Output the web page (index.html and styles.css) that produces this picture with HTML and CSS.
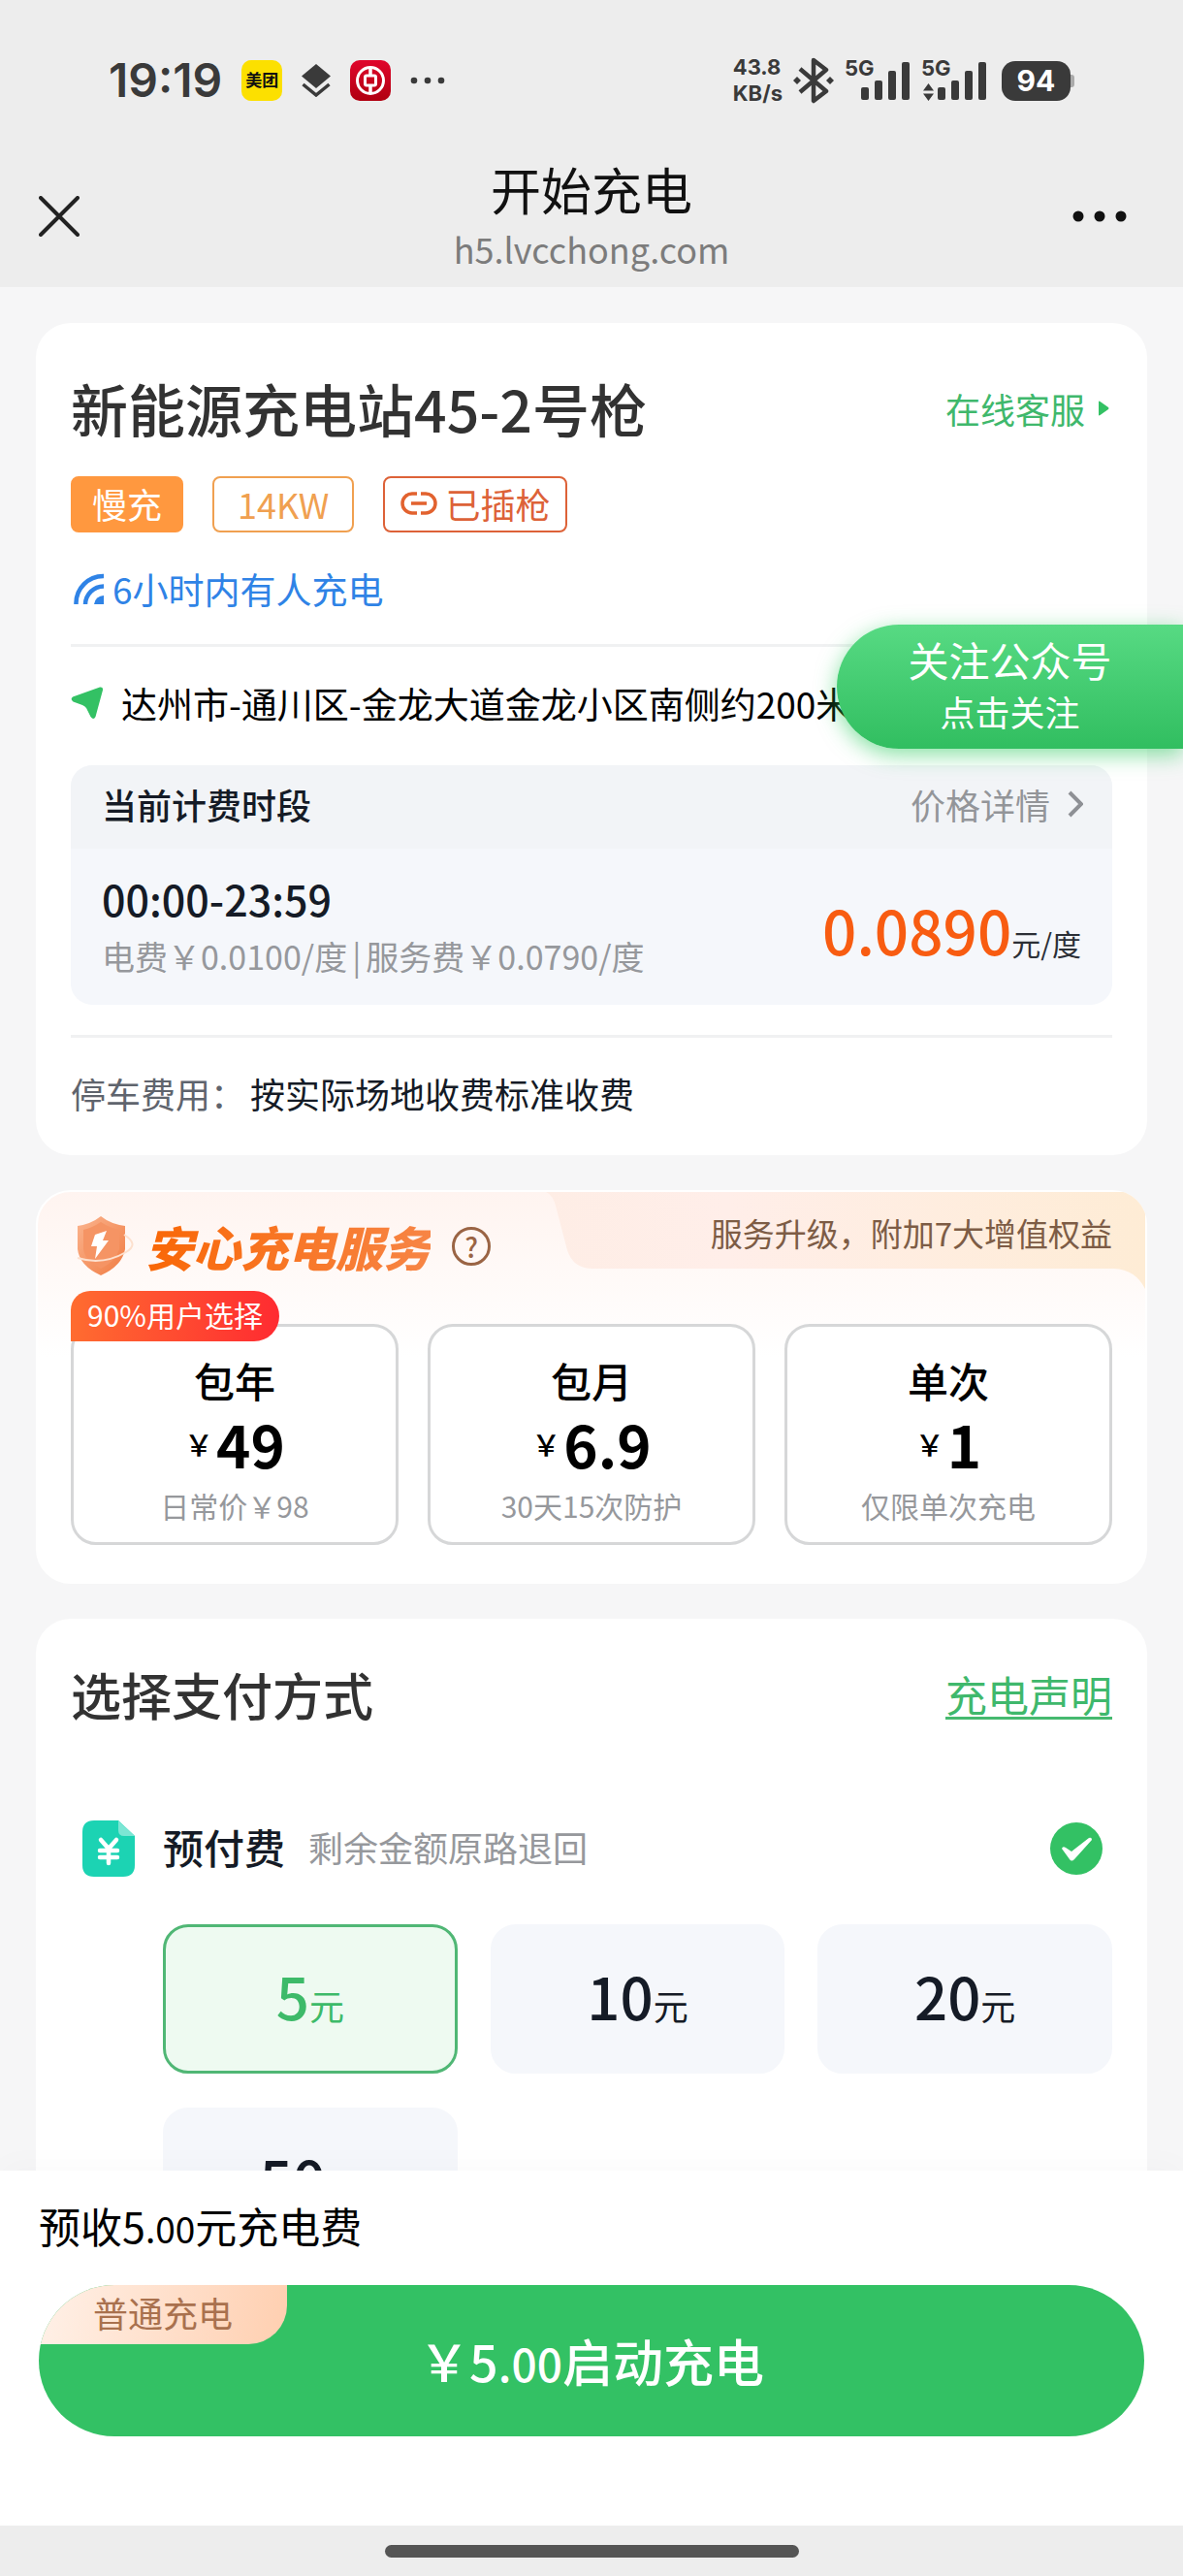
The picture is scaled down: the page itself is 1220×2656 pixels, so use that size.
FILE: index.html
```html
<!DOCTYPE html>
<html lang="zh-CN">
  <head>
    <meta charset="UTF-8">
    <meta name="viewport" content="width=device-width, initial-scale=1">
    <title>开始充电</title>
    <link rel="stylesheet" href="styles.css">
  </head>
  <body>
    <header class="top">
      <div class="status-bar">
        <div class="status-left">
          <span class="clock">19:19</span>
          <span class="app-icon">美团</span>
          <svg class="icon-layers" viewBox="0 0 30 34">
            <path d="M15 0L30 12.500L15 25L0 12.500Z" fill="#3a3a3a"/>
            <path d="M1.500 21L15 32L28.500 21" fill="none" stroke="#3a3a3a" stroke-width="3.500"/>
          </svg>
          <svg class="icon-bank" viewBox="0 0 42 42">
            <defs>
              <linearGradient id="bank" x1="0" y1="0" x2="0" y2="1">
                <stop offset="0" stop-color="#e0062c"/>
                <stop offset="1" stop-color="#b00010"/>
              </linearGradient>
            </defs>
            <rect width="42" height="42" rx="10" fill="url(#bank)"/>
            <circle cx="21" cy="21" r="13.500" fill="none" stroke="#fff" stroke-width="3"/>
            <rect x="15.500" y="16" width="11" height="10" rx="1.500" fill="none" stroke="#fff" stroke-width="3"/>
            <path d="M21 7v9M21 26v9" stroke="#fff" stroke-width="3.500"/>
          </svg>
          <svg class="icon-more" viewBox="0 0 36 8">
            <circle cx="4" cy="4" r="3.300"/><circle cx="18" cy="4" r="3.300"/><circle cx="32" cy="4" r="3.300"/>
          </svg>
        </div>
        <div class="status-right">
          <span class="net-speed">43.8<br>KB/s</span>
          <svg class="icon-bt" viewBox="0 0 42 48">
            <path d="M7 12L34 35L21 45V3L34 13L7 36" fill="none" stroke="#3a3a3a" stroke-width="4.500" stroke-linejoin="round"/>
            <path d="M4 20l4 4-4 4-4-4zM38 20l4 4-4 4-4-4z" fill="#3a3a3a"/>
          </svg>
          <svg class="icon-signal" viewBox="0 0 68 48">
            <text x="0" y="19">5G</text>
            <rect x="17" y="31" width="8" height="13" rx="2"/><rect x="31" y="24" width="8" height="20" rx="2"/>
            <rect x="45" y="14" width="8" height="30" rx="2"/><rect x="59" y="5" width="8" height="39" rx="2"/>
          </svg>
          <svg class="icon-signal" viewBox="0 0 68 48">
            <text x="0" y="19">5G</text>
            <path d="M7.500 27l5.500 7.500H2zM7.500 45L2 37.500h11z"/>
            <rect x="17" y="31" width="8" height="13" rx="2"/><rect x="31" y="24" width="8" height="20" rx="2"/>
            <rect x="45" y="14" width="8" height="30" rx="2"/><rect x="59" y="5" width="8" height="39" rx="2"/>
          </svg>
          <span class="battery">94</span>
        </div>
      </div>

      <nav class="nav-bar">
        <button class="nav-btn" type="button" aria-label="关闭">
          <svg width="42" height="42" viewBox="0 0 42 42">
            <path d="M2 2L40 40M40 2L2 40" fill="none" stroke="#222" stroke-width="4" stroke-linecap="round"/>
          </svg>
        </button>
        <div class="nav-title">
          <h1>开始充电</h1>
          <p>h5.lvcchong.com</p>
        </div>
        <button class="nav-btn nav-more" type="button" aria-label="更多">
          <svg width="56" height="12" viewBox="0 0 56 12">
            <circle cx="6" cy="6" r="5.500"/><circle cx="28" cy="6" r="5.500"/><circle cx="50" cy="6" r="5.500"/>
          </svg>
        </button>
      </nav>
    </header>

    <main class="content">
      <!-- station info -->
      <section class="card station">
        <div class="row">
          <h2 class="station-name">新能源充电站45-2号枪</h2>
          <a class="service-link" href="#">在线客服
            <svg width="12" height="16" viewBox="0 0 12 16"><path d="M1 1.500Q1 0 2.500 1L11 7Q12 8 11 9L2.500 15Q1 16 1 14.500Z" fill="#33c164"/></svg>
          </a>
        </div>
        <div class="tags">
          <span class="tag tag-fill">慢充</span>
          <span class="tag tag-line">14KW</span>
          <span class="tag tag-plug">
            <svg width="38" height="24" viewBox="0 0 38 24" fill="none" stroke="#e2622f" stroke-width="3.500">
              <path d="M17 2H12A10 10 0 0 0 12 22H17M21 2H26A10 10 0 0 1 26 22H21M11 12H27"/>
            </svg>已插枪
          </span>
        </div>
        <p class="recent">
          <svg width="32" height="32" viewBox="0 0 32 32" fill="none" stroke="#2f83e6" stroke-width="4.500">
            <path d="M2.500 32A28 28 0 0 1 31 3M12 32A19 19 0 0 1 31 13.500"/>
            <path d="M21 32A10 10 0 0 1 31 23V32Z" fill="#2f83e6" stroke="none"/>
          </svg>6小时内有人充电
        </p>
        <hr class="line">
        <p class="address">
          <svg width="34" height="34" viewBox="0 0 34 34">
            <path d="M2 10.500L30 .5Q33.500 0 33 3.500L25.500 31Q23.500 35 20.500 31L16 22Q14.500 20 12 19L2.500 15.500Q-1 13 2 10.500Z" fill="#33c164"/>
          </svg>
          <span>达州市-通川区-金龙大道金龙小区南侧约200米</span>
        </p>
        <div class="fee">
          <div class="fee-head">
            <strong>当前计费时段</strong>
            <a href="#">价格详情
              <svg width="16" height="28" viewBox="0 0 16 28"><path d="M2 2L14 14L2 26" fill="none" stroke="#8e9095" stroke-width="4"/></svg>
            </a>
          </div>
          <div class="fee-body">
            <div>
              <p class="fee-time">00:00-23:59</p>
              <p class="fee-detail">电费￥0.0100/度<span>|</span>服务费￥0.0790/度</p>
            </div>
            <p class="fee-price"><b>0.0890</b>元/度</p>
          </div>
        </div>
        <hr class="line">
        <p class="parking"><span>停车费用：</span>按实际场地收费标准收费</p>
      </section>

      <button class="follow" type="button"><span>关注公众号</span><small>点击关注</small></button>

      <!-- worry-free service plans -->
      <section class="card care">
        <svg class="care-bg" viewBox="0 0 1146 110" preserveAspectRatio="none">
          <defs>
            <linearGradient id="tab" x1="0" y1="0" x2="1" y2="0">
              <stop offset="0" stop-color="#feede5"/>
              <stop offset="0.300" stop-color="#ffeee9"/>
              <stop offset="1" stop-color="#feecd5"/>
            </linearGradient>
          </defs>
          <path d="M526 2Q534 5 537 20L548 62Q554 81 574 81H1112Q1134 82 1144 102V2Z" fill="url(#tab)"/>
        </svg>
        <div class="care-head">
          <svg class="shield" viewBox="0 0 60 64">
            <defs>
              <linearGradient id="shield" x1="0" y1="0" x2="1" y2="1">
                <stop offset="0" stop-color="#fbb48e"/>
                <stop offset="1" stop-color="#f07c43"/>
              </linearGradient>
            </defs>
            <path d="M26 1Q36 9 51 11V35Q48 52 26 62Q4 52 2 35V11Q16 9 26 1Z" fill="url(#shield)"/>
            <path d="M26 7Q35 13 45 15V35Q42 47 26 55Q10 47 8 35V15Q17 13 26 7Z" fill="#f59464"/>
            <path d="M20 20L32 16L28 26L34 26L20 45L22 32L16 32Z" fill="#fff"/>
            <path d="M50 20Q66 30 52 38Q28 52 2 44" fill="none" stroke="#fde0ce" stroke-width="2"/>
          </svg>
          <h2 class="care-title">安心充电服务</h2>
          <button class="help" type="button" aria-label="说明">?</button>
          <p class="care-note">服务升级，附加7大增值权益</p>
        </div>
        <div class="plans">
          <button class="plan" type="button">
            <span class="badge">90%用户选择</span>
            <span class="plan-name">包年</span>
            <span class="plan-price"><i>￥</i>49</span>
            <span class="plan-desc">日常价￥98</span>
          </button>
          <button class="plan" type="button">
            <span class="plan-name">包月</span>
            <span class="plan-price"><i>￥</i>6.9</span>
            <span class="plan-desc">30天15次防护</span>
          </button>
          <button class="plan" type="button">
            <span class="plan-name">单次</span>
            <span class="plan-price"><i>￥</i>1</span>
            <span class="plan-desc">仅限单次充电</span>
          </button>
        </div>
      </section>

      <!-- payment -->
      <section class="card pay">
        <div class="row">
          <h2 class="pay-title">选择支付方式</h2>
          <a class="statement" href="#">充电声明</a>
        </div>
        <label class="method">
          <svg width="54" height="58" viewBox="0 0 54 58">
            <path d="M12 0H37L54 16V46Q54 58 42 58H12Q0 58 0 46V12Q0 0 12 0Z" fill="#1cd3b3"/>
            <path d="M37 0L54 16H43Q37 16 37 10Z" fill="#7be6d4"/>
            <path d="M19 20L27 29L35 20M27 29V44M18 31H36M18 38H36" fill="none" stroke="#fff" stroke-width="4.500" stroke-linecap="round"/>
          </svg>
          <b>预付费</b>
          <span class="method-note">剩余金额原路退回</span>
          <span class="check">
            <input type="radio" name="method" checked>
            <svg width="54" height="54" viewBox="0 0 54 54">
              <circle cx="27" cy="27" r="27" fill="#33c164"/>
              <path d="M12 27Q13 24 16 26L22 30L40 16Q43 15 43 18L25 38Q22 41 20 38Z" fill="#fff"/>
            </svg>
          </span>
        </label>
        <div class="amounts">
          <label class="amount"><input type="radio" name="amount" checked><b>5</b>元</label>
          <label class="amount"><input type="radio" name="amount"><b>10</b>元</label>
          <label class="amount"><input type="radio" name="amount"><b>20</b>元</label>
          <label class="amount"><input type="radio" name="amount"><b>50</b>元</label>
        </div>
      </section>
    </main>

    <footer class="bottom">
      <div class="bottom-bar">
        <p class="prepaid">预收5<small>.00</small>元充电费</p>
        <button class="start" type="button">
          <span class="start-tag">普通充电</span>
          ￥5<small>.00</small>启动充电
        </button>
      </div>
      <div class="home-area"><span class="home-pill"></span></div>
    </footer>
  </body>
</html>
```

FILE: styles.css
```css
* {
  box-sizing: border-box;
  margin: 0;
  padding: 0;
}

body {
  display: flex;
  flex-direction: column;
  height: 100vh;
  overflow: hidden;
  background-color: #f6f6f7;
  color: #151b26;
  font-family: "Noto Sans CJK SC", sans-serif;
  font-size: 36px;
  line-height: 48px;
}

button {
  border: none;
  background: none;
  color: inherit;
  font-family: inherit;
  cursor: pointer;
}

a {
  text-decoration: none;
}

svg {
  display: block;
  flex-shrink: 0;
}

/* header */
.top {
  background-color: #ededed;
}

.status-bar {
  display: flex;
  justify-content: space-between;
  align-items: center;
  height: 166px;
  padding: 0 112px;
  color: #3a3a3a;
  font-family: Inter, "Noto Sans CJK SC", sans-serif;
}

.status-left,
.status-right {
  display: flex;
  align-items: center;
}

.status-left {
  gap: 20px;
}

.status-right {
  gap: 11px;
}

.clock {
  font-size: 48px;
  font-weight: 600;
}

.app-icon {
  width: 42px;
  height: 42px;
  border-radius: 10px;
  background-color: #fce000;
  color: #111;
  font-size: 17px;
  font-weight: 700;
  line-height: 42px;
  text-align: center;
}

.icon-layers {
  width: 30px;
  height: 34px;
}

.icon-bank {
  width: 42px;
  height: 42px;
}

.icon-more {
  width: 36px;
  height: 8px;
  fill: #3a3a3a;
}

.net-speed {
  font-size: 22px;
  font-weight: 700;
  line-height: 27px;
}

.icon-bt {
  width: 42px;
  height: 48px;
}

.icon-signal {
  width: 68px;
  height: 48px;
  fill: #3a3a3a;
  font-size: 22px;
  font-weight: 700;
  overflow: visible;
}

.battery {
  position: relative;
  width: 71px;
  height: 41px;
  margin: 0 4px;
  border-radius: 14px;
  background-color: #3a3a3a;
  color: #fff;
  font-size: 30px;
  font-weight: 700;
  line-height: 41px;
  text-align: center;
}

.battery::after {
  content: "";
  position: absolute;
  top: 14px;
  right: -4px;
  width: 4px;
  height: 13px;
  border-radius: 0 3px 3px 0;
  background-color: #aaa;
}

.nav-bar {
  display: flex;
  justify-content: space-between;
  align-items: center;
  height: 130px;
  padding: 0 40px 16px;
}

.nav-btn {
  display: flex;
  width: 80px;
}

.nav-more {
  justify-content: flex-end;
  padding-right: 18px;
  fill: #111;
}

.nav-title {
  text-align: center;
}

.nav-title h1 {
  color: #111;
  font-size: 52px;
  font-weight: 400;
  line-height: 66px;
}

.nav-title p {
  color: #7c7c7c;
  line-height: 56px;
}

/* cards */
.content {
  position: relative;
  flex: 1;
  min-height: 0;
  overflow: hidden;
  padding: 37px;
}

.card {
  position: relative;
  margin-bottom: 36px;
  padding: 48px 36px 40px;
  border-radius: 36px;
  background-color: #fff;
}

.row {
  display: flex;
  justify-content: space-between;
  align-items: center;
}

.line {
  height: 3px;
  border: none;
  background-color: #f0f1f2;
}

/* station */
.station-name {
  color: #323232;
  font-size: 59px;
  font-weight: 500;
  line-height: 80px;
}

.service-link {
  display: flex;
  align-items: center;
  gap: 13px;
  padding-right: 3px;
  color: #3fb86c;
}

.tags {
  display: flex;
  gap: 30px;
  margin-top: 30px;
}

.tag {
  display: flex;
  align-items: center;
  height: 58px;
  padding: 0 20px 3px;
  border: 2px solid;
  border-radius: 8px;
}

.tag-fill {
  border-color: #ff983f;
  background-color: #ff983f;
  color: #fff;
}

.tag-line {
  padding: 0 24px 3px;
  color: #f0a050;
}

.tag-plug {
  gap: 8px;
  padding: 0 16px 3px;
  color: #dd6238;
}

.recent {
  display: flex;
  align-items: center;
  gap: 8px;
  margin: 34px 0 33px;
  padding-left: 3px;
  color: #2f83e6;
  font-size: 37px;
}

.address {
  display: flex;
  align-items: center;
  gap: 18px;
  margin: 34px 0 40px;
  color: #000;
  font-size: 37px;
  white-space: nowrap;
}

.fee {
  margin-bottom: 31px;
  border-radius: 22px;
  background-color: #f5f7fb;
  overflow: hidden;
}

.fee-head {
  display: flex;
  justify-content: space-between;
  align-items: center;
  height: 86px;
  padding: 0 30px 6px 32px;
  background-color: #f2f4f7;
}

.fee-head strong {
  font-weight: 500;
}

.fee-head a {
  display: flex;
  align-items: center;
  gap: 18px;
  color: #939599;
}

.fee-body {
  display: flex;
  justify-content: space-between;
  align-items: center;
  height: 161px;
  padding: 0 32px;
  line-height: 60px;
}

.fee-time {
  font-size: 43px;
  font-weight: 500;
}

.fee-detail {
  color: #96989c;
  font-size: 34px;
}

.fee-detail span {
  margin: 0 5px;
}

.fee-price {
  padding-top: 18px;
  color: #2b2f36;
  font-size: 30px;
}

.fee-price b {
  color: #f85c11;
  font-size: 62px;
  font-weight: 500;
}

.parking {
  margin-top: 33px;
}

.parking span {
  margin-right: 5px;
  color: #5f646d;
}

.follow {
  position: absolute;
  top: 348px;
  right: 0;
  display: flex;
  flex-direction: column;
  justify-content: center;
  align-items: center;
  width: 357px;
  height: 128px;
  padding-bottom: 4px;
  border-radius: 64px 0 0 64px;
  background: linear-gradient(#57da83, #31be60);
  box-shadow: 0 6px 22px rgba(51, 205, 100, 0.6);
  color: #fff;
  font-size: 42px;
  line-height: 54px;
}

.follow small {
  font-size: 36px;
  line-height: 52px;
}

/* service plans */
.care {
  padding: 26px 34px 38px;
  border: 2px solid #fff;
  background: linear-gradient(#fff4f0, #fff 170px);
}

.care-bg {
  position: absolute;
  top: -2px;
  left: -2px;
  width: calc(100% + 4px);
  height: 110px;
  border-radius: 36px 36px 0 0;
}

.care-head {
  position: relative;
  display: flex;
  align-items: center;
  height: 60px;
  padding-left: 5px;
}

.shield {
  width: 60px;
  height: 64px;
}

.care-title {
  margin: 0 22px 0 12px;
  background: linear-gradient(90deg, #f96706, #f78545);
  background-clip: text;
  -webkit-background-clip: text;
  color: transparent;
  font-size: 49px;
  font-style: italic;
  font-weight: 900;
  line-height: 60px;
}

.help {
  width: 40px;
  height: 40px;
  border: 3px solid #9a6444;
  border-radius: 50%;
  color: #9a6444;
  font-size: 28px;
  font-weight: 500;
  line-height: 32px;
}

.care-note {
  align-self: flex-start;
  margin-left: auto;
  color: #7d5c45;
  font-size: 33px;
  line-height: 32px;
}

.plans {
  display: grid;
  grid-template-columns: repeat(3, 1fr);
  gap: 30px;
  margin-top: 50px;
}

.plan {
  position: relative;
  display: flex;
  flex-direction: column;
  align-items: center;
  padding: 27px 0 11px;
  border: 3px solid #d6d7d8;
  border-radius: 26px;
  background-color: #fff;
  color: #000;
}

.badge {
  position: absolute;
  top: -37px;
  left: -3px;
  height: 52px;
  padding: 0 17px;
  border-radius: 20px 26px 26px 0;
  background: linear-gradient(90deg, #ff6c30, #ff2b31);
  color: #fff;
  font-size: 30px;
  line-height: 48px;
}

.plan-name {
  font-size: 42px;
  font-weight: 500;
  line-height: 56px;
}

.plan-price {
  display: flex;
  align-items: center;
  font-size: 60px;
  font-weight: 700;
  line-height: 74px;
}

.plan-price i {
  margin-right: 3px;
  font-size: 30px;
  font-style: normal;
  font-weight: 500;
}

.plan-desc {
  color: #96989c;
  font-size: 30px;
  line-height: 54px;
}

/* payment */
.pay-title {
  color: #323232;
  font-size: 52px;
  font-weight: 500;
  line-height: 60px;
}

.statement {
  border-bottom: 3px solid #46b96f;
  color: #3fb86c;
  font-size: 43px;
}

.method {
  display: flex;
  align-items: center;
  height: 60px;
  margin-top: 99px;
  padding: 0 10px 0 12px;
}

.method b {
  margin: 0 24px 0 29px;
  padding-bottom: 4px;
  font-size: 42px;
  font-weight: 500;
}

.method-note {
  padding-bottom: 4px;
  color: #96989c;
}

.check {
  position: relative;
  margin-left: auto;
}

.check input,
.amount input {
  position: absolute;
  inset: 0;
  appearance: none;
}

.amounts {
  display: grid;
  grid-template-columns: repeat(3, 1fr);
  gap: 35px 34px;
  margin-top: 48px;
  padding-left: 95px;
}

.amount {
  position: relative;
  display: flex;
  justify-content: center;
  align-items: baseline;
  height: 154px;
  border: 3px solid #f5f7fb;
  border-radius: 26px;
  background-color: #f5f7fb;
  line-height: 140px;
}

.amount b {
  font-size: 60px;
  font-weight: 500;
}

.amount:has(input:checked) {
  border-color: #50b775;
  background-color: #eefaf1;
  color: #3dba69;
}

/* bottom */
.bottom {
  position: relative;
}

.bottom-bar {
  padding: 26px 40px 92px;
  background-color: #fff;
  box-shadow: 0 -8px 30px rgba(0, 0, 0, 0.02);
}

.prepaid {
  color: #000;
  font-size: 43px;
  line-height: 60px;
}

.prepaid small {
  font-size: 37px;
  line-height: 1;
}

.start {
  position: relative;
  display: block;
  width: 100%;
  height: 156px;
  margin-top: 32px;
  border-radius: 78px;
  background-color: #33c164;
  color: #fff;
  font-size: 52px;
  font-weight: 500;
  line-height: 150px;
  overflow: hidden;
}

.start small {
  font-size: 46px;
  line-height: 1;
}

.start-tag {
  position: absolute;
  top: 0;
  left: 0;
  padding: 0 56px 5px;
  border-bottom-right-radius: 40px;
  background: linear-gradient(100deg, #fff1e8, #ffcfb0);
  color: #a9714e;
  font-size: 36px;
  font-weight: 400;
  line-height: 56px;
}

.home-area {
  display: flex;
  justify-content: center;
  align-items: center;
  height: 52px;
  background-color: #ededed;
}

.home-pill {
  width: 35%;
  height: 13px;
  border-radius: 7px;
  background-color: #555;
}
```
